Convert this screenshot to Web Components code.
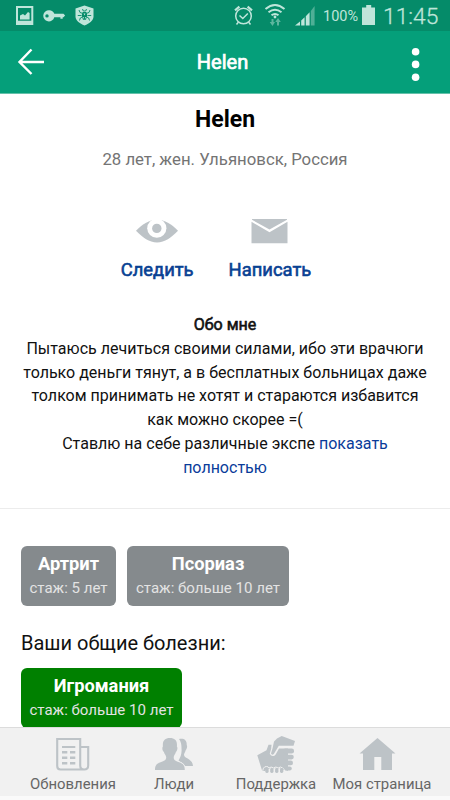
<!DOCTYPE html>
<html lang="ru">
<head>
<meta charset="utf-8">
<title>Helen</title>
<style>
  html, body { margin: 0; height: 100%; background: #fff; }
  body { font-family: Roboto, "Liberation Sans", sans-serif; overflow: hidden; }
</style>
</head>
<body>
<profile-app></profile-app>

<script>
const ICONS = {
  picture: ['16 6 18 20', `<path fill-rule="evenodd" d="M16 6h17.300v19H16zM18 8v12.800h13.300V8z"/><path d="M20 19.500v-4l3-1.500 2 1.500 3-3.500 1.600 1v6.500z"/>`],
  key: ['43 9 23 14', `<path fill-rule="evenodd" d="M49.300 10.200a5.800 5.800 0 0 1 5 3.600h9.200l1.600 1.700-1.600 1.700h-.8v1.500h-2.300v-1.500h-6.100a5.600 5.600 0 1 1-5-7zM47 14.200a1.700 1.700 0 1 0 0 3.400 1.700 1.700 0 0 0 0-3.400z"/>`],
  shield: ['75 5 20 21', `<path d="M84.500 5.500l9 3v8c0 4-4 7-9 9-5-2-9-5-9-9v-8z"/><g fill="none" stroke="#058b69" stroke-width=".9"><path d="M82.500 9l.8 2h2.400l.8-2M79 10l1 2.500 3 1M90 10l-1 2.500-3 1M77.800 15.500h3.500M87.700 15.500h3.500M79.500 20.500l.8-2.500 2-1M89.500 20.500l-.8-2.500-2-1"/></g><path fill="#058b69" d="M82.700 12h3.600l1 3.500-1.300 4.300h-3L81.700 15.500z"/><path d="M83.500 13.500h2l-1 2zM83 17h.8l.3 1.500h-.7zM85.200 17h.8l-.4 1.500h-.7z"/>`],
  alarm: ['234 5 20 21', `<g fill="none" stroke="currentColor" stroke-width="1.500"><circle cx="243.500" cy="16" r="7.800"/><path d="M239.500 15.500l3.300 3 5-5"/><path stroke-width="2.200" d="M235 10.300l4.400-3.700M252 10.300l-4.400-3.700"/><path d="M238.500 22l-2 2.500M248.500 22l2 2.500"/></g>`],
  wifi: ['264 3 22 24', `<g fill="none" stroke="currentColor" stroke-width="2"><path d="M265.500 9q9.500-8 19 0M268.500 12.300q6.500-5.200 13 0M271.500 15.300q3.500-2.600 7 0"/></g><circle cx="275" cy="17" r="1.400"/><path opacity=".48" d="M271.500 19h2v3h1.500l-2.500 4-2.800-4h1.800zM277 25.500h2V22h1.800L278 18l-2.700 4h1.700z"/>`],
  signal: ['294 5 21 21', `<path d="M295 25.500l5-4v4zM301.200 20.500l3.400-3.200v8.200h-3.400zM305.800 16.200l3.800-4v13.300h-3.800z"/><path opacity=".4" d="M310.800 11l3.800-5v19.500h-3.800z"/>`],
  battery: ['362 4 14 21', `<path d="M362 7.500h4.200V5h5v2.500h3.800V25h-13z"/>`],
  back: ['17 48 28 28', `<path fill="none" stroke="currentColor" stroke-width="2.400" d="M31.500 49.500L19.500 62l12 12M19 62h25"/>`],
  dots: ['411 46 9 37', `<circle cx="415.600" cy="51.700" r="3.800"/><circle cx="415.600" cy="64.400" r="3.800"/><circle cx="415.600" cy="77.200" r="3.800"/>`],
  eye: ['135 218 44 26', `<path d="M136 230.800c7-7 13-11 21-11s14 4 21 11c-7 7-13 11.700-21 11.700s-14-4.700-21-11.700z"/><circle cx="156.800" cy="228.200" r="9.600" fill="#fff"/><circle cx="156.800" cy="228.400" r="4.700"/>`],
  mail: ['251 218 37 26', `<path d="M252 219h35v.800l-17.500 9.800-17.500-9.800zM251.500 221.800l18 10.500 18-10.500v21.400h-36z"/>`],
  news: ['56 737 34 34', `<g fill="none" stroke="currentColor" stroke-width="2.100"><path d="M57.200 739h23v26.500q0 4 4 4H60.500q-3.300 0-3.300-3.500zM80.200 747h8v18.500q0 4-4 4t-4-4z"/></g><path d="M62 746h13.300v2H62zM62 751h5.300v2.500H62zM70 751h5.300v2.500H70zM62 756.500h5.300v2.500H62zM70 756.500h5.300v2.500H70zM62 762h5.300v2.500H62zM70 762h5.300v2.500H70z"/>`],
  people: ['154 737 40 34', `<path d="M179 739c5-1 8 1 7.700 6 1 1.500 0 4-1 5.200-.4 2-1.700 3-1.700 4.600 0 4 8.500 3.500 9 11.200h-8c-1.500-3-5-4-6.500-5.500 2-3.500 3.500-7 3-12 0-4-.5-7-2.500-9.500z"/><path stroke="#f1f1f1" stroke-width="1.500" paint-order="stroke" d="M155 770c0-4.500 1.500-6.500 5.500-7.800 4-1.400 5.700-2 5.700-5 0-1.700-1.800-3-2.300-5.200-1.600-1.200-2-4.200-1-5.500-.5-6 2-8.500 7-8.500s7.600 2.500 7 8.500c1 1.300.5 4.300-1 5.500-.5 2.200-2.200 3.500-2.200 5.200 0 3 1.500 3.600 5.500 5 4 1.300 5.600 3.300 5.600 7.800z"/>`],
  hands: ['256 734 41 39', `
    <path d="M257.300 754.300l9.200-5 2-5.500h3v10q1.500 2.500 4 0l3.500-6.300h9v22.500q-3.500-2-5.500-1.500-2.200-2.800-4.500-.5-2.200-2.500-4.500 0-2.200-2.300-4.500 0-2.500-1.500-3.800 2h-3z"/>
    <rect x="283" y="747.500" width="11" height="5" rx="2.300"/>
    <rect x="283" y="753.700" width="10.800" height="4.700" rx="2.300"/>
    <rect x="283" y="759.600" width="10" height="4.600" rx="2.300"/>
    <rect x="283" y="765.400" width="8.800" height="4.200" rx="2.100"/>
    <path fill="none" stroke="#f1f1f1" stroke-width="1" d="M262.800 772q-.5-6.500 3.700-6.500 2 0 2.500 1.500 2-2 4.500 0 2.400-2 4.700 0 2.300-2 4.300 0 2.500 1 2.500 4.500"/>
    <g><rect x="265.300" y="767" width="3.300" height="5" rx="1.400"/><rect x="270.200" y="767" width="3.300" height="5" rx="1.400"/><rect x="275.100" y="767" width="3.300" height="5" rx="1.400"/><rect x="280" y="767" width="3.300" height="5" rx="1.400"/></g>
    <path stroke="#f1f1f1" stroke-width="2.400" stroke-linejoin="round" paint-order="stroke" d="M281.700 735l13.300 5-1.500 4.700h-14.700l-5 8.300q-1.800 1.500-2.800-.5l1.500-5 1.500-7 3-3z"/>`],
  home: ['359 737 47 34', `<path d="M377.500 738L395.500 753.500H392V770h-10.700v-13h-7v13H363v-16.500h-3.500z"/>`]
};

class AppIcon extends HTMLElement {
  constructor() {
    super();
    const [box, shape] = ICONS[this.getAttribute('name')];
    const [, , w, h] = box.split(' ');
    this.attachShadow({mode: 'open'}).innerHTML = `
      <style>
        :host { display: block; flex: none; }
        svg { display: block; fill: currentColor; }
      </style>
      <svg width="${w}" height="${h}" viewBox="${box}">${shape}</svg>
    `;
  }
}
customElements.define('app-icon', AppIcon);

class StatusBar extends HTMLElement {
  constructor() {
    super();
    this.attachShadow({mode: 'open'}).innerHTML = `
      <style>
        :host {
          display: flex; align-items: flex-start; box-sizing: border-box;
          height: 31px; padding-left: 16px;
          background: #058b69; color: #bfe5da;
        }
        .percent { font-size: 14.500px; line-height: 18px; margin: 8px 0 0 8px; width: 35px; white-space: nowrap; }
        .time { font-size: 22.800px; line-height: 28px; margin: 3px 0 0 7px; white-space: nowrap; font-weight: 300; -webkit-text-stroke: .3px; }
      </style>
      <app-icon name="picture" style="margin-top:6px"></app-icon>
      <app-icon name="key" style="margin:9px 0 0 9px"></app-icon>
      <app-icon name="shield" style="margin:5px 0 0 9px"></app-icon>
      <app-icon name="alarm" style="margin:5px 0 0 139px"></app-icon>
      <app-icon name="wifi" style="margin:3px 0 0 10px"></app-icon>
      <app-icon name="signal" style="margin:5px 0 0 8px"></app-icon>
      <span class="percent">100%</span>
      <app-icon name="battery" style="margin:4px 0 0 4px"></app-icon>
      <span class="time">11:45</span>
    `;
  }
}
customElements.define('status-bar', StatusBar);

class TitleBar extends HTMLElement {
  constructor() {
    super();
    this.attachShadow({mode: 'open'}).innerHTML = `
      <style>
        :host {
          display: flex; align-items: center; box-sizing: border-box;
          height: 63px; padding: 0 30px 0 17px;
          background: #059f7a; color: #fff; border-bottom: 1px solid #65c1aa;
        }
        .title {
          flex: 1; text-align: center; padding-right: 11px;
          font-size: 20px; line-height: 24px; -webkit-text-stroke: .7px;
        }
      </style>
      <app-icon name="back"></app-icon>
      <div class="title"><slot></slot></div>
      <app-icon name="dots" style="margin-top:5px"></app-icon>
    `;
  }
}
customElements.define('title-bar', TitleBar);

class ProfileAction extends HTMLElement {
  constructor() {
    super();
    this.attachShadow({mode: 'open'}).innerHTML = `
      <style>
        :host { display: flex; flex-direction: column; align-items: center; }
        app-icon { color: #bdc3c7; }
        span { margin-top: 15px; font-size: 18.400px; line-height: 22px; color: #084193; -webkit-text-stroke: .6px; white-space: nowrap; }
      </style>
      <app-icon name="${this.getAttribute('icon')}"></app-icon>
      <span><slot></slot></span>
    `;
  }
}
customElements.define('profile-action', ProfileAction);

class DiseaseTag extends HTMLElement {
  constructor() {
    super();
    this.attachShadow({mode: 'open'}).innerHTML = `
      <style>
        :host {
          display: block; box-sizing: border-box; height: 60px; width: var(--tag-width);
          padding-top: 6px; border-radius: 6px; text-align: center; white-space: nowrap;
          background: var(--tag-color, #858a8d);
        }
        .name { font-size: 18.300px; line-height: 24px; font-weight: 700; color: #fff; }
        .term { font-size: 15.050px; line-height: 24px; color: #e3e3e3; }
      </style>
      <div class="name"><slot></slot></div>
      <div class="term">${this.getAttribute('term')}</div>
    `;
  }
}
customElements.define('disease-tag', DiseaseTag);

class NavItem extends HTMLElement {
  constructor() {
    super();
    this.attachShadow({mode: 'open'}).innerHTML = `
      <style>
        :host { display: flex; flex-direction: column; align-items: center; justify-content: flex-end; color: #bdc3c7; }
        app-icon { margin-bottom: var(--icon-gap, 4px); }
        span { font-size: 14.900px; line-height: 18px; color: #666; white-space: nowrap; }
      </style>
      <app-icon name="${this.getAttribute('icon')}"></app-icon>
      <span><slot></slot></span>
    `;
  }
}
customElements.define('nav-item', NavItem);

class ProfileApp extends HTMLElement {
  constructor() {
    super();
    this.attachShadow({mode: 'open'}).innerHTML = `
      <style>
        :host { display: flex; flex-direction: column; width: 450px; height: 800px; overflow: hidden; }
        main { height: 633px; flex: none; color: #111; }
        h1 { margin: 12px 0 0; font-size: 23px; line-height: 28px; text-align: center; color: #000; }
        .info { margin-top: 15px; font-size: 16.750px; line-height: 20px; text-align: center; color: #747474; }
        .actions { display: flex; justify-content: center; gap: 35px; margin: 49px 18px 0 0; }
        .about { margin-top: 32px; font-size: 16.020px; line-height: 23.750px; text-align: center; white-space: nowrap; }
        .about b { font-weight: 400; -webkit-text-stroke: .6px; }
        .about a { color: #0a3c9a; }
        hr { margin: 28.500px 0 37.500px; border: 0; border-top: 1px solid #ececec; }
        .tags { display: flex; gap: 11px; padding-left: 21px; }
        h2 { margin: 24px 0 0 21px; font-size: 20px; line-height: 26px; font-weight: 400; }
        .common { margin-top: 11.500px; }
        nav {
          display: grid; grid-template-columns: 102px 100px 104px 108px;
          box-sizing: border-box; height: 69px; padding: 0 0 3px 22px;
          background: #f1f1f1; border-top: 1px solid #dcdcdc;
        }
        footer { height: 4px; background: #fafafa; }
      </style>
      <status-bar></status-bar>
      <title-bar>Helen</title-bar>
      <main>
        <h1>Helen</h1>
        <div class="info">28 лет, жен. Ульяновск, Россия</div>
        <div class="actions">
          <profile-action icon="eye">Следить</profile-action>
          <profile-action icon="mail">Написать</profile-action>
        </div>
        <div class="about">
          <b>Обо мне</b><br>
          Пытаюсь лечиться своими силами, ибо эти врачюги<br>
          только деньги тянут, а в бесплатных больницах даже<br>
          толком принимать не хотят и стараются избавится<br>
          как можно скорее =(<br>
          Ставлю на себе различные экспе <a>показать<br>полностью</a>
        </div>
        <hr>
        <div class="tags">
          <disease-tag style="--tag-width:95px" term="стаж: 5 лет">Артрит</disease-tag>
          <disease-tag style="--tag-width:162px" term="стаж: больше 10 лет">Псориаз</disease-tag>
        </div>
        <h2>Ваши общие болезни:</h2>
        <div class="tags common">
          <disease-tag style="--tag-width:161px;--tag-color:#008000" term="стаж: больше 10 лет">Игромания</disease-tag>
        </div>
      </main>
      <nav>
        <nav-item icon="news">Обновления</nav-item>
        <nav-item icon="people">Люди</nav-item>
        <nav-item icon="hands" style="--icon-gap:1px">Поддержка</nav-item>
        <nav-item icon="home">Моя страница</nav-item>
      </nav>
      <footer></footer>
    `;
  }
}
customElements.define('profile-app', ProfileApp);
</script>
</body>
</html>
